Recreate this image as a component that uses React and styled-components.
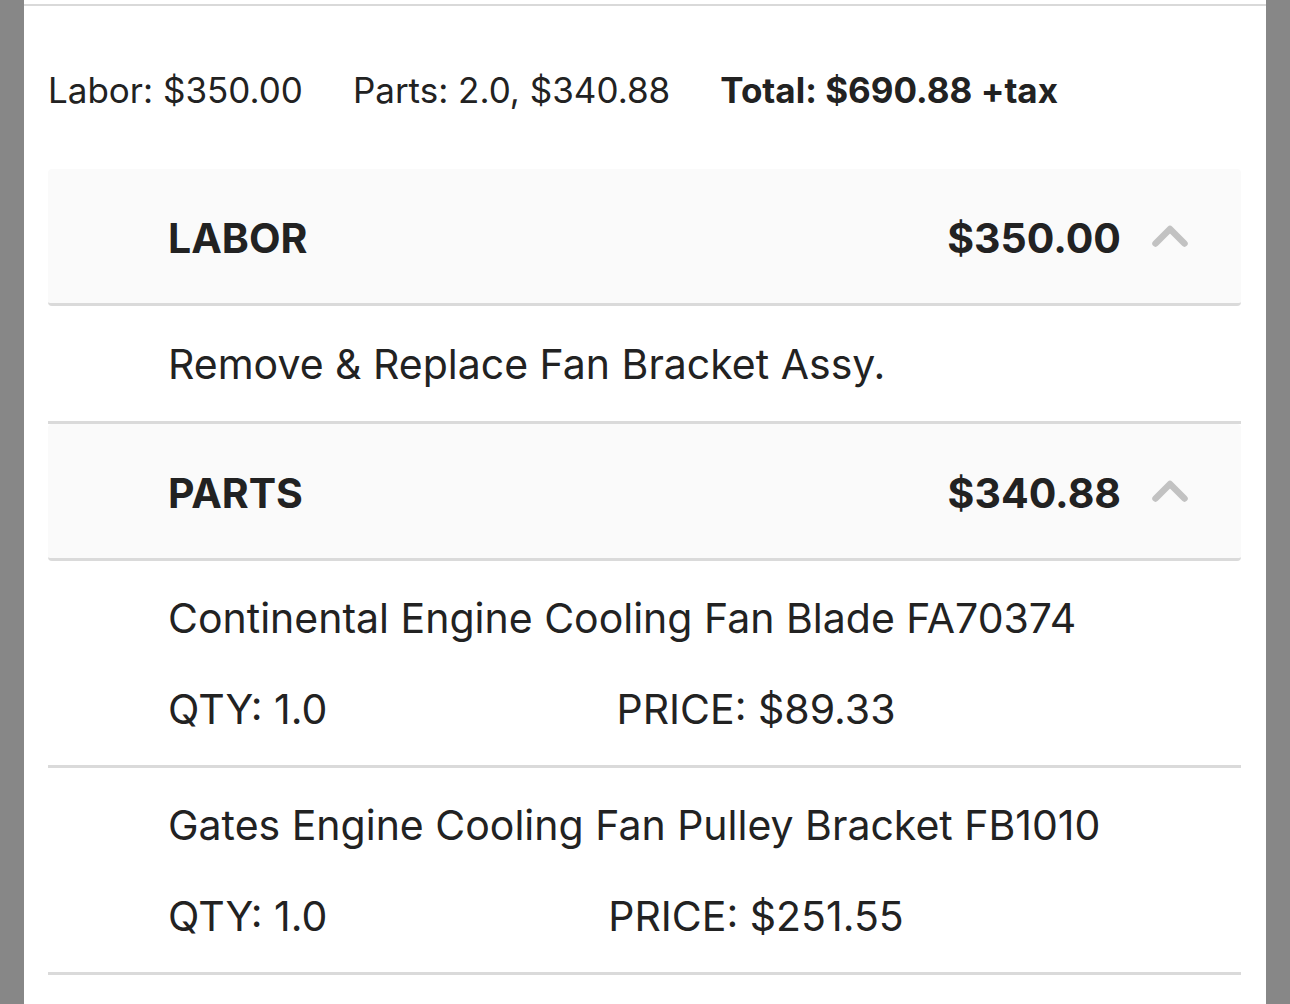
import React from "react";
import styled, { createGlobalStyle } from "styled-components";

const GlobalStyle = createGlobalStyle`
  html, body {
    margin: 0;
    padding: 0;
    background: #878787;
  }
  body {
    font-family: "Inter", "Roboto", "Noto Sans", sans-serif;
    color: #222222;
    -webkit-font-smoothing: antialiased;
  }
  * { box-sizing: border-box; }
`;

const Panel = styled.main`
  margin: 0 24px;
  min-height: 1004px;
  background: #ffffff;
  padding: 4px 25px 40px 24px;
  display: flex;
  flex-direction: column;
`;

const TopRule = styled.div`
  height: 2px;
  margin: 0 -25px 0 -24px;
  background: #d9d9d9;
`;

const Summary = styled.div`
  display: flex;
  align-items: baseline;
  gap: 50px;
  margin: 63px 0 58px;
  font-size: 35px;
  line-height: 42px;
`;

const SummaryItem = styled.span`
  font-weight: ${(p) => (p.$strong ? 700 : 400)};
  white-space: nowrap;
`;

const SectionHeader = styled.div`
  display: flex;
  align-items: center;
  height: 137px;
  padding: 44px 53px 40px 120px;
  background: #fafafa;
  border-bottom: 3px solid #dadada;
  border-radius: 4px;
  font-size: 41px;
  line-height: 50px;
  font-weight: 700;
`;

const SectionTitle = styled.span`
  flex: 1;
`;

const SectionAmount = styled.span`
  margin-right: 31px;
`;

const Chevron = styled.svg`
  width: 36px;
  height: 22px;
  margin-bottom: 4px;
  flex: none;
`;

const Description = styled.div`
  padding: 33px 0 32px 120px;
  border-bottom: 3px solid #dadada;
  font-size: 41px;
  line-height: 50px;
`;

const PartItem = styled.div`
  display: flex;
  flex-direction: column;
  gap: 41px;
  padding: 32px 0 31px 120px;
  border-bottom: 3px solid #dadada;
  font-size: 41px;
  line-height: 50px;
`;

const PartName = styled.div`
  white-space: nowrap;
`;

const PartMeta = styled.div`
  display: grid;
  grid-template-columns: 392px 392px;
`;

const Qty = styled.span``;

const Price = styled.span`
  justify-self: center;
  white-space: nowrap;
`;

const ChevronUp = () => (
  <Chevron viewBox="0 0 36 22" aria-hidden="true">
    <path
      d="M3.5 18.5 L18 4 L32.5 18.5"
      fill="none"
      stroke="#c2c2c2"
      strokeWidth="6.5"
      strokeLinecap="round"
      strokeLinejoin="round"
    />
  </Chevron>
);

const Section = ({ title, amount }) => (
  <SectionHeader>
    <SectionTitle>{title}</SectionTitle>
    <SectionAmount>{amount}</SectionAmount>
    <ChevronUp />
  </SectionHeader>
);

const parts = [
  { name: "Continental Engine Cooling Fan Blade FA70374", qty: "1.0", price: "$89.33" },
  { name: "Gates Engine Cooling Fan Pulley Bracket FB1010", qty: "1.0", price: "$251.55" },
];

export default function App() {
  return (
    <>
      <GlobalStyle />
      <Panel>
        <TopRule />
        <Summary>
          <SummaryItem>Labor: $350.00</SummaryItem>
          <SummaryItem>Parts: 2.0, $340.88</SummaryItem>
          <SummaryItem $strong>Total: $690.88 +tax</SummaryItem>
        </Summary>

        <Section title="LABOR" amount="$350.00" />
        <Description>Remove &amp; Replace Fan Bracket Assy.</Description>

        <Section title="PARTS" amount="$340.88" />
        {parts.map((p) => (
          <PartItem key={p.name}>
            <PartName>{p.name}</PartName>
            <PartMeta>
              <Qty>QTY: {p.qty}</Qty>
              <Price>PRICE: {p.price}</Price>
            </PartMeta>
          </PartItem>
        ))}
      </Panel>
    </>
  );
}
